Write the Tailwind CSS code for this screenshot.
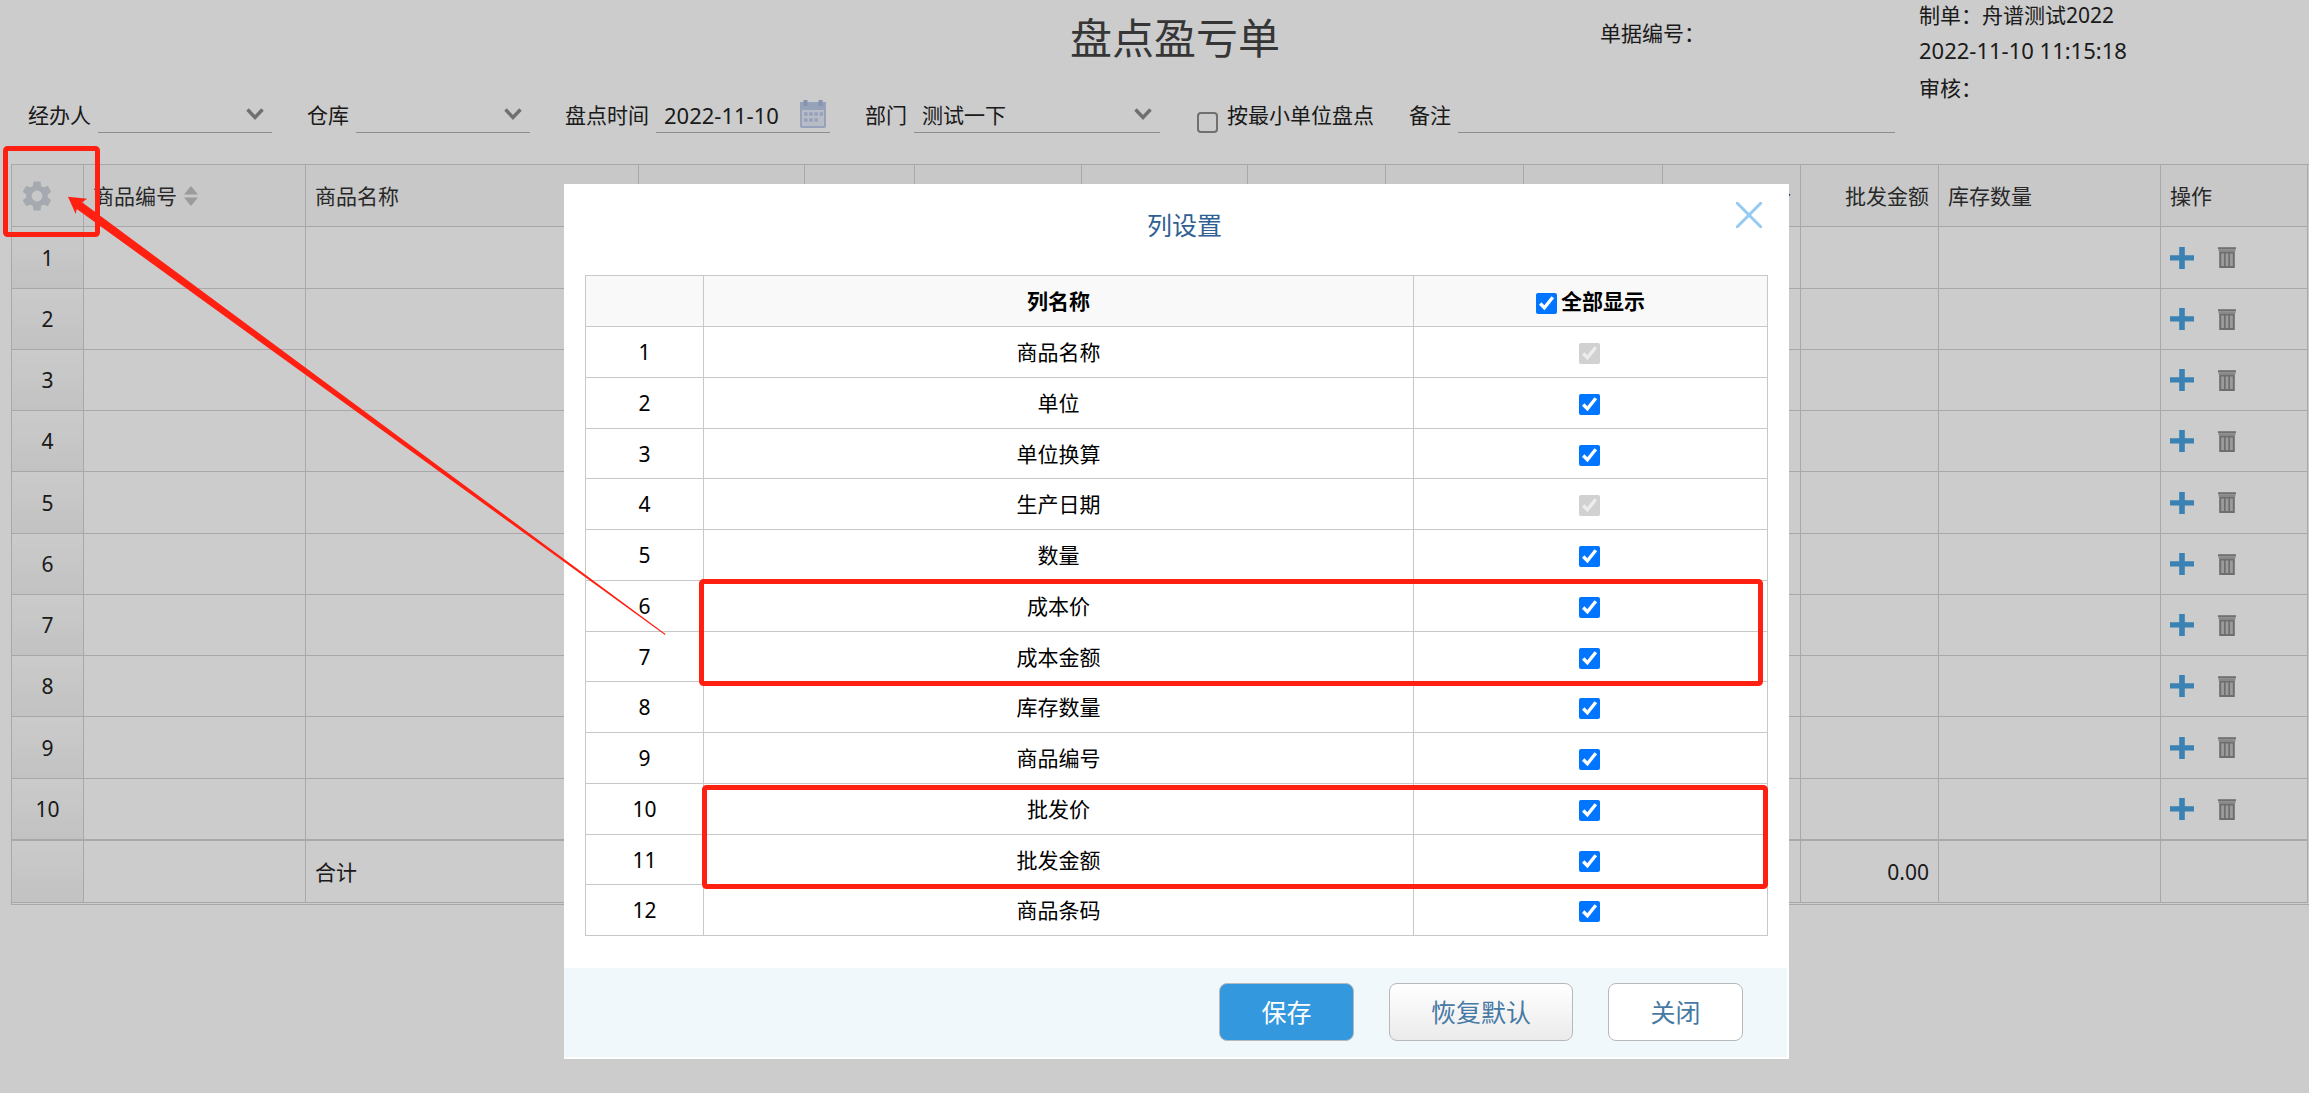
<!DOCTYPE html>
<html lang="zh-CN">
<head>
<meta charset="utf-8">
<title>盘点盈亏单</title>
<script src="https://cdn.jsdelivr.net/npm/@tailwindcss/browser@4"></script>
</head>
<body class="relative min-h-screen overflow-hidden bg-white font-['Noto_Sans','Noto_Sans_CJK_SC',sans-serif] text-[21px] leading-[30px] text-[#222]">

<svg class="hidden">
  <symbol id="chevron" viewBox="0 0 18 12"><path d="M1.5 1.5 9 9.5l7.5-8" fill="none" stroke="currentColor" stroke-width="3.4"/></symbol>
  <symbol id="plus" viewBox="0 0 24 22"><path d="M9.200 0h5.600v8.200H24v5.400h-9.200V22H9.200v-8.400H0V8.200h9.200z" fill="currentColor"/></symbol>
  <symbol id="trash" viewBox="0 0 18 21">
    <path d="M0 1.200h18" stroke="#8c8c8c" stroke-width="2"/><path d="M.5 3.400h17" stroke="#aaa" stroke-width="2.400"/>
    <path d="M2.200 5.500v14.500h13.600V5.500z" fill="#c4c4c4" stroke="#8a8a8a" stroke-width="2"/>
    <path d="M6.800 6v14M11.200 6v14" stroke="#8a8a8a" stroke-width="1.700"/>
  </symbol>
</svg>

<main>
  <header class="grid h-[100px] grid-cols-[1070fr_530fr_319fr_390fr]">
    <h1 class="col-start-2 pt-[10px] text-[42px] leading-[56px] text-[#444]">盘点盈亏单</h1>
    <p class="pt-[18px]">单据编号：</p>
    <div class="flex flex-col">
      <p class="leading-[30px]">制单：舟谱测试2022</p>
      <p class="pt-[5px] text-[22px]">2022-11-10 11:15:18</p>
      <p class="pt-[8px]">审核：</p>
    </div>
  </header>

  <form class="flex h-[33px] items-start gap-[35px] pl-[28px]">
    <div class="flex gap-[7px]">
      <label for="handler">经办人</label>
      <div class="relative">
        <select id="handler" class="h-[33px] w-[174px] appearance-none border-b border-[#afafaf] pl-2"><option></option></select>
        <svg class="pointer-events-none absolute top-2 right-2 h-3 w-[18px] text-[#8c8c8c]"><use href="#chevron"/></svg>
      </div>
    </div>
    <div class="flex gap-[7px]">
      <label for="store">仓库</label>
      <div class="relative">
        <select id="store" class="h-[33px] w-[174px] appearance-none border-b border-[#afafaf] pl-2"><option></option></select>
        <svg class="pointer-events-none absolute top-2 right-2 h-3 w-[18px] text-[#8c8c8c]"><use href="#chevron"/></svg>
      </div>
    </div>
    <div class="flex gap-[7px]">
      <label for="date">盘点时间</label>
      <div class="relative">
        <input id="date" type="text" value="2022-11-10" class="h-[33px] w-[174px] border-b border-[#afafaf] pb-[3px] pl-2 text-[22px]">
        <svg class="pointer-events-none absolute top-0 right-1 h-7 w-[26px]" viewBox="0 0 26 28">
          <rect x="1" y="3" width="24" height="24" rx="1" fill="#e6ebf8" stroke="#bccae9" stroke-width="2"/>
          <path d="M0 2h26v8H0z" fill="#bccae9"/>
          <path d="M5.500 0v6M20.500 0v6" stroke="#a9b8dc" stroke-width="4"/>
          <path d="M4 14h19M4 20h14" stroke="#bccae9" stroke-width="3.500" stroke-dasharray="3.500 1.700"/>
        </svg>
      </div>
    </div>
    <div class="flex gap-[7px]">
      <label for="dept">部门</label>
      <div class="relative">
        <select id="dept" class="h-[33px] w-[246px] appearance-none border-b border-[#afafaf] pb-[3px] pl-2"><option>测试一下</option></select>
        <svg class="pointer-events-none absolute top-2 right-2 h-3 w-[18px] text-[#8c8c8c]"><use href="#chevron"/></svg>
      </div>
    </div>
    <div class="flex gap-[9px] pl-[2px]">
      <input id="minunit" type="checkbox" class="mt-3 size-[21px] appearance-none rounded-[4px] border-2 border-[#8c8c8c]">
      <label for="minunit">按最小单位盘点</label>
    </div>
    <div class="flex gap-[7px]">
      <label for="remark">备注</label>
      <input id="remark" type="text" class="h-[33px] w-[437px] border-b border-[#afafaf] pl-2">
    </div>
  </form>

  <div class="mt-[31px] ml-[11px] border-y border-l border-[#d2d2d2] pr-[1px] pb-[1px]">
    <table class="w-full table-fixed border-separate border-spacing-0">
      <colgroup>
        <col class="w-[72px]"><col class="w-[222px]"><col><col class="w-[166px]"><col class="w-[110px]"><col class="w-[167px]"><col class="w-[166px]"><col class="w-[138px]"><col class="w-[138px]"><col class="w-[139px]"><col class="w-[138px]"><col class="w-[138px]"><col class="w-[222px]"><col class="w-[147px]">
      </colgroup>
      <thead class="bg-[#fafafa] text-left text-[#333] [&_th]:border-r [&_th]:border-b [&_th]:border-[#d2d2d2] [&_th]:px-[9px] [&_th]:font-normal">
        <tr class="h-[62px]">
          <th><button type="button" aria-label="列设置" class="block pl-[1px]">
            <svg class="size-[30px] text-[#cdd5dd]" viewBox="2 2 20 20"><path fill="currentColor" d="M19.140 12.940c.04-.3.06-.61.06-.94 0-.32-.02-.64-.07-.94l2.030-1.580a.49.49 0 0 0 .12-.61l-1.920-3.320a.488.488 0 0 0-.59-.22l-2.390.96c-.5-.38-1.030-.7-1.620-.94l-.36-2.540a.484.484 0 0 0-.48-.41h-3.840c-.24 0-.43.17-.47.41l-.36 2.540c-.59.24-1.130.57-1.620.94l-2.390-.96a.488.488 0 0 0-.59.22L2.740 8.870c-.12.21-.08.47.12.61l2.030 1.580c-.05.3-.09.63-.09.94s.02.64.07.94l-2.030 1.580a.49.49 0 0 0-.12.61l1.920 3.320c.12.22.37.29.59.22l2.390-.96c.5.38 1.030.7 1.620.94l.36 2.540c.05.24.24.41.48.41h3.840c.24 0 .44-.17.47-.41l.36-2.540c.59-.24 1.130-.56 1.620-.94l2.390.96c.22.08.47 0 .59-.22l1.920-3.320c.12-.22.07-.47-.12-.61zM12 15.600A3.600 3.600 0 1 1 12 8.400a3.600 3.600 0 0 1 0 7.200z"/></svg>
          </button></th>
          <th><span class="flex items-center gap-[7px]">商品编号<svg class="h-5 w-[14px]" viewBox="0 0 14 20"><path d="M7 0l7 8.500H0zM7 20l7-8.500H0z" fill="#c2c2c2"/></svg></span></th>
          <th>商品名称</th><th>商品条码</th><th>单位</th><th>单位换算</th><th>生产日期</th>
          <th class="text-right">数量</th><th class="text-right">成本价</th><th class="text-right">成本金额</th><th class="text-right">批发价</th><th class="text-right">批发金额</th>
          <th>库存数量</th><th>操作</th>
        </tr>
      </thead>
      <tbody id="lines" class="[&_td]:border-r [&_td]:border-b [&_td]:border-[#d2d2d2] [&_td]:px-[9px]"></tbody>
      <tfoot class="[&_td]:border-t [&_td]:border-r [&_td]:border-b [&_td]:border-[#d2d2d2] [&_td]:px-[9px]">
        <tr class="h-[63px]">
          <td class="bg-linear-to-b from-[#fefefe] to-[#f3f3f3]"></td><td></td><td>合计</td><td></td><td></td><td></td><td></td><td></td><td></td><td></td><td></td><td class="text-right">0.00</td><td></td><td></td>
        </tr>
      </tfoot>
    </table>
  </div>
</main>

<div class="absolute inset-0 flex items-start justify-center bg-black/20 pt-[184px] pl-[44px]">
  <section role="dialog" aria-labelledby="dlg-title" class="relative w-[1225px] border-r-2 border-b-2 border-white bg-white text-black">
    <h2 id="dlg-title" class="h-[91px] pt-[24px] pl-[18px] text-center text-[25px] leading-[34px] text-[#2f5f93]">列设置</h2>
    <button type="button" aria-label="关闭" class="absolute top-[18px] right-[25px]">
      <svg class="size-[26px]" viewBox="0 0 26 26"><path d="M0 0l26 26M26 0L0 26" stroke="#95cbf0" stroke-width="3"/></svg>
    </button>
    <div class="pr-[19px] pb-[32px] pl-[21px]">
      <table class="w-full table-fixed border-separate border-spacing-0 border-t border-l border-[#c8c8c8] text-center [&_td]:border-r [&_td]:border-b [&_td]:border-[#c8c8c8] [&_th]:border-r [&_th]:border-b [&_th]:border-[#c8c8c8]">
        <colgroup><col class="w-[118px]"><col><col class="w-[354px]"></colgroup>
        <thead class="bg-[#f9f9f9]">
          <tr class="h-[51px]">
            <th></th><th>列名称</th>
            <th><label class="flex items-center justify-center gap-[4px]"><input type="checkbox" checked class="mt-[4px] size-[21px]">全部显示</label></th>
          </tr>
        </thead>
        <tbody id="columns"></tbody>
      </table>
    </div>
    <footer class="flex h-[89px] justify-end gap-[35px] bg-[#f0f8fc] pt-[15px] pr-[44px] text-[25px] text-[#4679a4]">
      <button type="button" class="h-[58px] w-[135px] rounded-[8px] border border-[#b9b9b9] bg-[#3498de] text-white">保存</button>
      <button type="button" class="h-[58px] w-[184px] rounded-[8px] border border-[#b9b9b9] bg-linear-to-b from-white to-[#ebebeb]">恢复默认</button>
      <button type="button" class="h-[58px] w-[135px] rounded-[8px] border border-[#b9b9b9] bg-white">关闭</button>
    </footer>
  </section>
</div>

<svg class="pointer-events-none absolute top-0 left-0 h-full w-full" fill="none" stroke="#ff2012" stroke-width="5">
  <rect x="5.500" y="148.500" width="92" height="86" rx="2"/>
  <rect x="701.500" y="581.500" width="1059" height="102" rx="2"/>
  <rect x="704.500" y="787.500" width="1061" height="99" rx="2"/>
  <path d="M68 196.700 87.300 198.700 82 202.300 665.500 634 665 635 76.700 209 75.700 214z" fill="#ff2012" stroke="none"/>
</svg>

<script>
  const blank = '<td></td>';
  document.getElementById('lines').innerHTML = Array.from({ length: 10 }, (_, i) =>
    `<tr class="${i % 4 === 0 ? 'h-[62px]' : 'h-[61px]'}">
      <td class="bg-linear-to-b from-[#fefefe] to-[#f3f3f3] text-center">${i + 1}</td>${blank.repeat(12)}
      <td><span class="flex gap-[24px]">
        <button type="button" aria-label="添加行"><svg class="h-[22px] w-6 text-[#49a3e0]"><use href="#plus"/></svg></button>
        <button type="button" aria-label="删除行"><svg class="h-[21px] w-[18px]"><use href="#trash"/></svg></button>
      </span></td>
    </tr>`).join('');

  const names = ['商品名称', '单位', '单位换算', '生产日期', '数量', '成本价', '成本金额', '库存数量', '商品编号', '批发价', '批发金额', '商品条码'];
  const locked = ['商品名称', '生产日期'];
  document.getElementById('columns').innerHTML = names.map((name, i) =>
    `<tr class="${i % 4 === 2 ? 'h-[50px]' : 'h-[51px]'}">
      <td>${i + 1}</td><td>${name}</td>
      <td class="pr-[2px]"><input type="checkbox" aria-label="${name}" checked ${locked.includes(name) ? 'disabled' : ''} class="mx-auto mt-[3px] block size-[21px]"></td>
    </tr>`).join('');
</script>
</body>
</html>
